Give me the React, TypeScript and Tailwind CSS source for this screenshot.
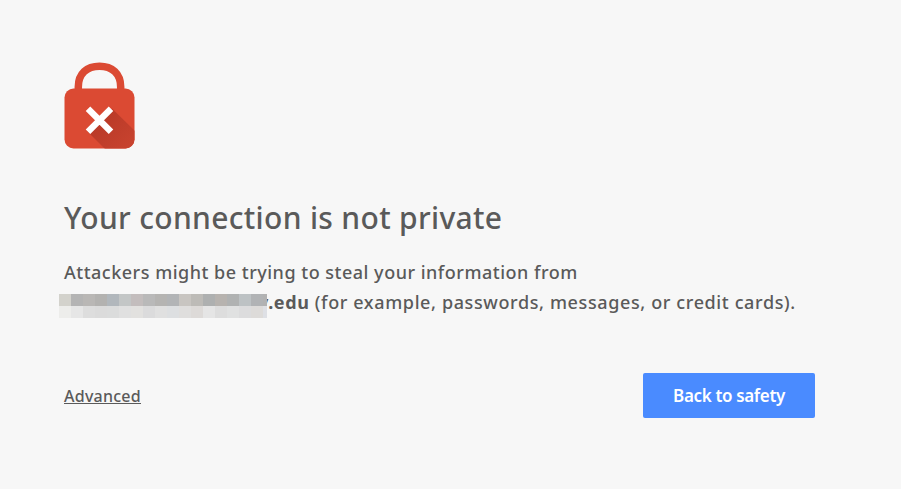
import React from "react";

const topRow = ["#d3d2cc", "#b4b4b4", "#b9b7b5", "#b3b2b0", "#b1b7bc", "#c3c6c6", "#c3bdbd", "#b9b9b9", "#b5b4b2", "#b2b4b6", "#c8c5c1", "#bdbbb7", "#aeb0b0", "#b7b3af", "#b0b2b2", "#bdc2c4", "#b1b3b5", "#b2b2b2"];
const bottomRow = ["#ededeb", "#e6e6e6", "#dddddd", "#dbdbdb", "#dbdcdc", "#e0e0e0", "#e2e1df", "#dbdbdc", "#e0e0e0", "#dddfe1", "#dfdedd", "#dddad8", "#e5e5e5", "#dddddd", "#e0e1e1", "#dcdcdd", "#dddbd9", "#dee0e5"];

const LockIcon: React.FC = () => (
  <svg width="72" height="88" viewBox="0 0 72 88" fill="none" aria-hidden="true">
    <defs>
      <linearGradient id="shade" x1="36" y1="58" x2="66" y2="88" gradientUnits="userSpaceOnUse">
        <stop stopColor="#b93a28" />
        <stop offset="1" stopColor="#c9432f" />
      </linearGradient>
      <clipPath id="body">
        <rect x="0.5" y="26.5" width="70" height="60" rx="9" />
      </clipPath>
    </defs>
    <path d="M14.3 30V25C14.3 11.5 23 4.2 35.5 4.2S56.7 11.5 56.7 25V30" stroke="#db4a33" strokeWidth="7.5" />
    <rect x="0.5" y="26.5" width="70" height="60" rx="9" fill="#db4a33" />
    <path d="M48 46.5L75 73V92H46L23 69L35 58Z" fill="url(#shade)" clipPath="url(#body)" />
    <path d="M24 46.8L47 69.8M47 46.8L24 69.8" stroke="#fff" strokeWidth="6.4" />
  </svg>
);

const RedactedHost: React.FC = () => (
  <span className="relative z-10 -ml-[5px] mt-[7px] flex w-[208px] shrink-0 flex-col overflow-hidden">
    {[topRow, bottomRow].map((row, index) => (
      <span key={index} className="flex">
        {row.map((color, i) => (
          <span key={i} className="h-3 w-3 shrink-0" style={{ backgroundColor: color }} />
        ))}
      </span>
    ))}
  </span>
);

const App: React.FC = () => {
  return (
    <main className="h-[489px] w-[901px] overflow-hidden bg-[#f7f7f7] pl-16 pr-[86px] pt-[62px] font-['Noto_Sans',sans-serif] text-[#5a5a5a]">
      <LockIcon />
      <h1 className="mt-[46px] whitespace-nowrap text-[30px] font-medium leading-[44px] tracking-[0.32px]">
        Your connection is not private
      </h1>
      <div className="mt-[17px] whitespace-nowrap text-[18px] font-medium leading-[30px] tracking-[0.5px]">
        <p>Attackers might be trying to steal your information from</p>
        <div className="flex h-[30px] items-start tracking-[0.62px]">
          <RedactedHost />
          <p className="-ml-[9px]">
            <strong className="font-bold">y.edu</strong> (for example, passwords, messages, or credit cards).
          </p>
        </div>
      </div>
      <div className="mt-[56px] flex h-[45px] items-center justify-between">
        <a href="#" className="text-[16px] font-medium tracking-[0.25px] underline">Advanced</a>
        <button className="h-[45px] w-[172px] rounded-[2px] bg-[#4a8bff] text-[17px] font-semibold tracking-[-0.35px] text-white">
          Back to safety
        </button>
      </div>
    </main>
  );
};

export default App;
